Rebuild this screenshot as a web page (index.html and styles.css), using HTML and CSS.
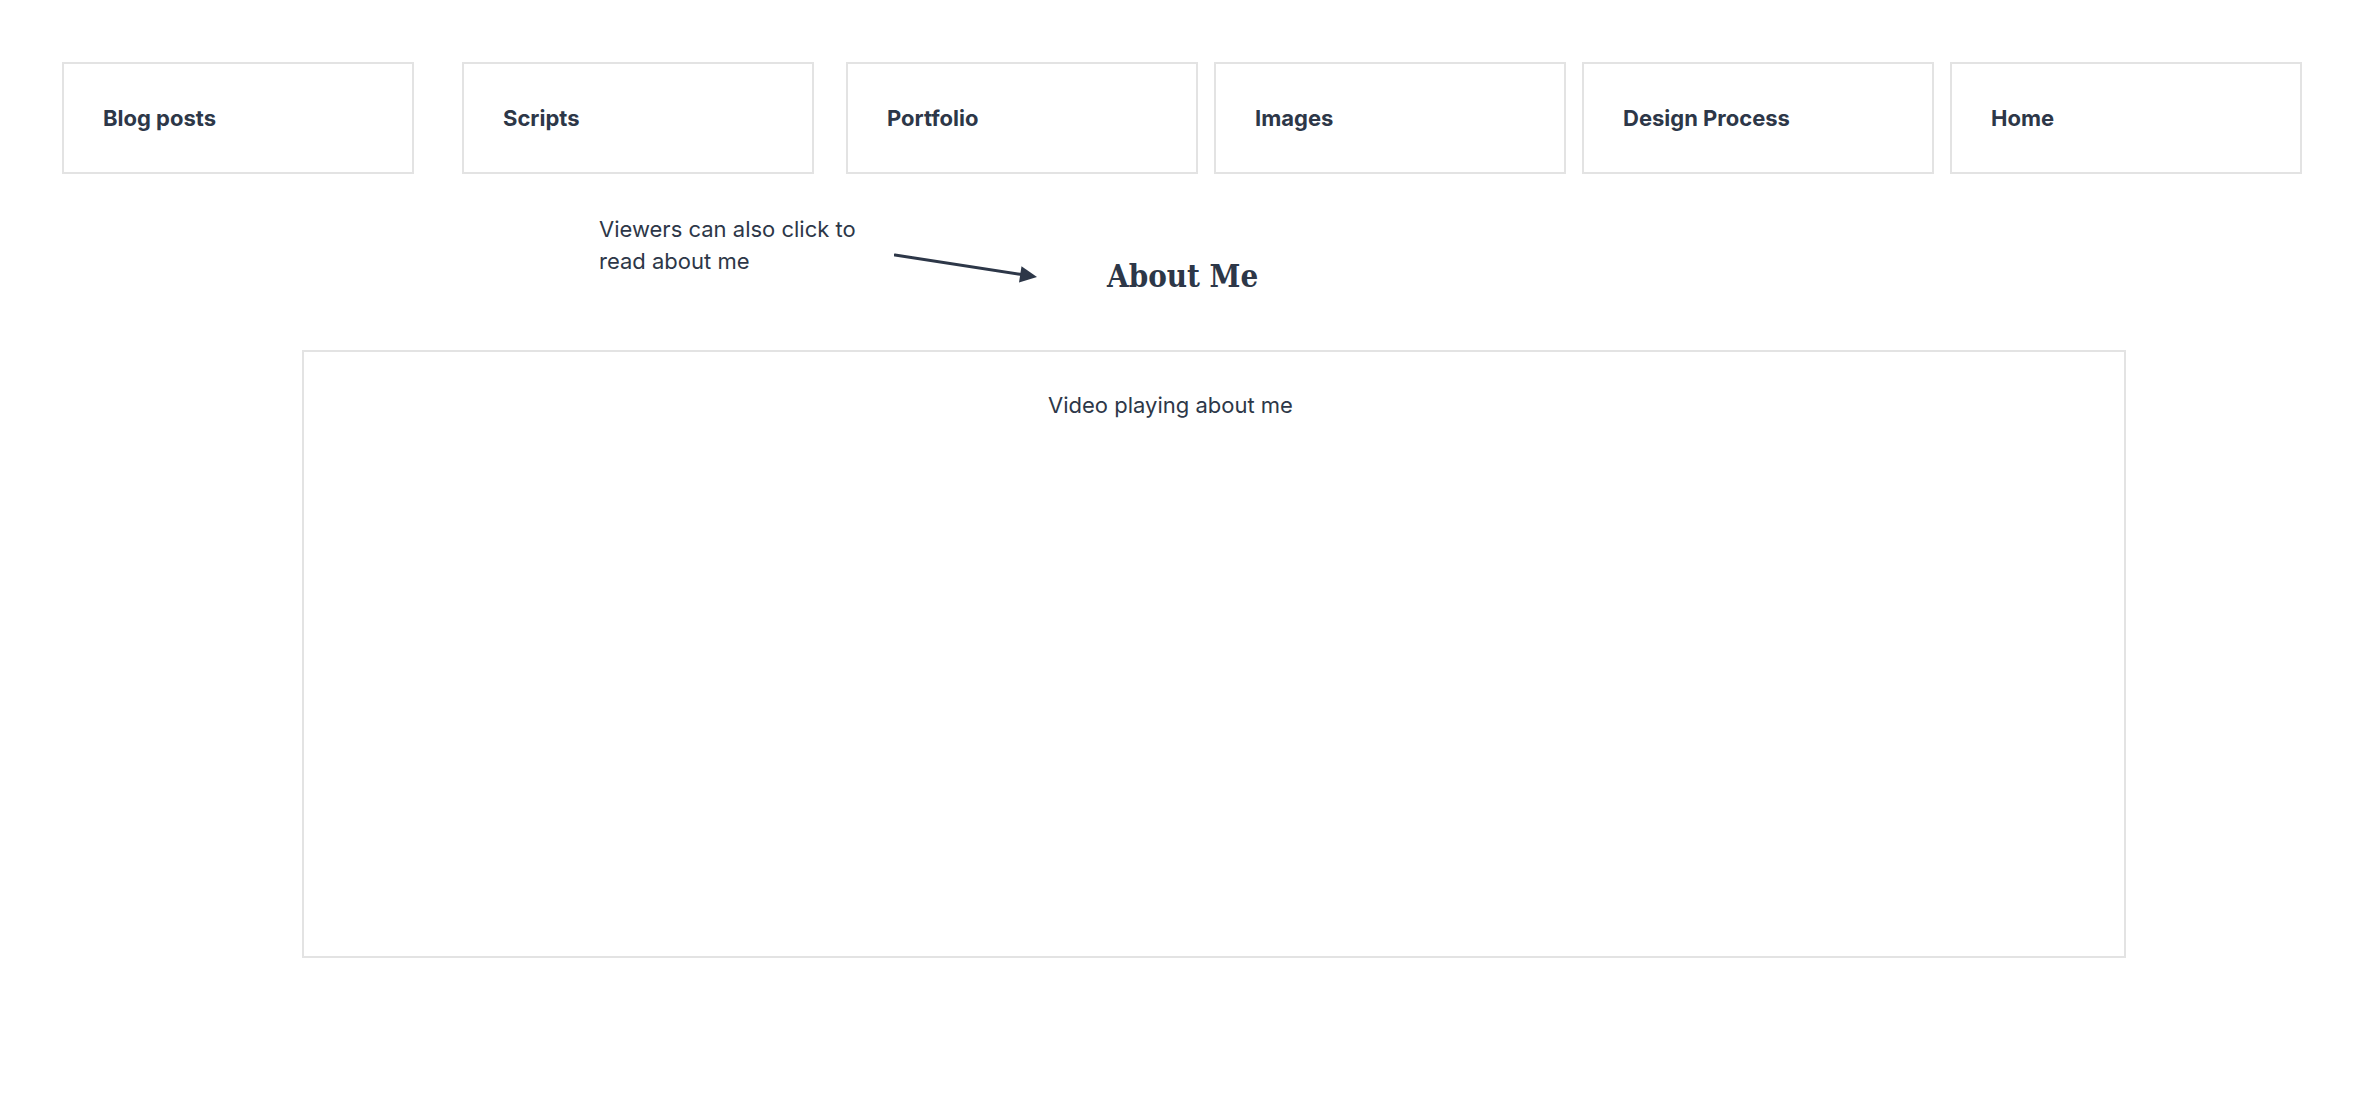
FILE: index.html
```html
<!DOCTYPE html>
<html lang="en">
<head>
<meta charset="utf-8">
<title>About Me</title>
<link rel="stylesheet" href="styles.css">
</head>
<body>
<div class="page">
  <nav class="nav">
    <a class="card card-first" href="#">Blog posts</a>
    <a class="card card-second" href="#">Scripts</a>
    <a class="card" href="#">Portfolio</a>
    <a class="card" href="#">Images</a>
    <a class="card" href="#">Design Process</a>
    <a class="card" href="#">Home</a>
  </nav>
  <div class="annot-row">
    <p class="annot-text">Viewers can also click to read about me</p>
    <svg class="arrow" width="144" height="34" viewBox="0 0 144 34" aria-hidden="true">
      <line x1="1" y1="3" x2="128" y2="22.6" stroke="#2d3748" stroke-width="3" stroke-linecap="round"/>
      <polygon points="143,25 125,30.5 127.5,14.3" fill="#2d3748"/>
    </svg>
    <h1 class="heading">About Me</h1>
  </div>
  <section class="video-box">
    <p class="video-text">Video playing about me</p>
  </section>
</div>
</body>
</html>
```
FILE: styles.css
```css
* { box-sizing: border-box; }
html, body { margin: 0; padding: 0; background: #ffffff; }
body {
  font-family: Inter, "Noto Sans", "Liberation Sans", sans-serif;
  color: #2d3748;
}
.page {
  padding: 62px 53px 0 62px;
}
.nav {
  display: flex;
  gap: 16px;
}
.card {
  width: 352px;
  height: 112px;
  flex: 0 0 auto;
  border: 2px solid #e3e3e3;
  display: flex;
  align-items: center;
  padding-left: 39px;
  font-size: 22px;
  font-weight: 700;
  line-height: 30px;
  color: #2d3748;
  text-decoration: none;
}
.card-first { margin-right: 32px; }
.card-second { margin-right: 16px; }

.annot-row {
  display: flex;
  align-items: flex-start;
  margin-top: 39px;
  margin-left: 537px;
}
.annot-text {
  margin: 0;
  width: 290px;
  font-size: 22px;
  line-height: 32px;
}
.arrow {
  display: block;
  flex: 0 0 auto;
  margin-left: 5px;
  margin-top: 39px;
}
.heading {
  margin: 45px 0 0 69px;
  font-family: "DejaVu Serif Condensed", "DejaVu Serif", "Liberation Serif", serif;
  font-stretch: semi-condensed;
  font-weight: 700;
  font-size: 31px;
  line-height: 36px;
  color: #2d3748;
}
.video-box {
  margin-top: 56px;
  margin-left: 240px;
  width: 1824px;
  height: 608px;
  border: 2px solid #e3e3e3;
  padding: 39px 0 0 744px;
}
.video-text {
  margin: 0;
  font-size: 22px;
  line-height: 28px;
}
```
